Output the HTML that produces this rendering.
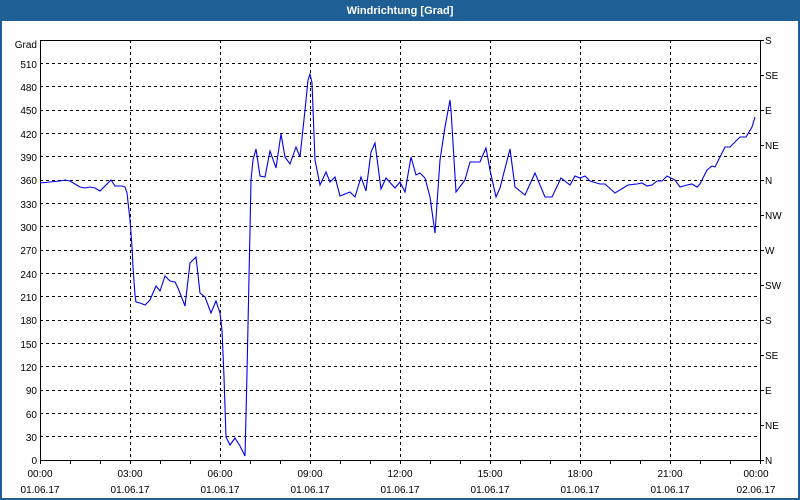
<!DOCTYPE html>
<html><head><style>
body{margin:0;width:800px;height:500px;overflow:hidden;background:#fff;font-family:"Liberation Sans",sans-serif}
</style></head><body>
<svg width="800" height="500" xmlns="http://www.w3.org/2000/svg" style="display:block">
<rect x="0" y="0" width="800" height="500" fill="#1e5f96"/>
<rect x="2" y="21" width="796" height="477" fill="#fff"/>
<text x="400" y="14" fill="#fff" font-size="11" font-weight="bold" text-anchor="middle" font-family="Liberation Sans,sans-serif">Windrichtung [Grad]</text>
<g stroke="#000" stroke-width="1" stroke-dasharray="3,3" shape-rendering="crispEdges">
<line x1="40" y1="63.5" x2="760" y2="63.5"/><line x1="40" y1="86.5" x2="760" y2="86.5"/><line x1="40" y1="110.5" x2="760" y2="110.5"/><line x1="40" y1="133.5" x2="760" y2="133.5"/><line x1="40" y1="156.5" x2="760" y2="156.5"/><line x1="40" y1="180.5" x2="760" y2="180.5"/><line x1="40" y1="203.5" x2="760" y2="203.5"/><line x1="40" y1="226.5" x2="760" y2="226.5"/><line x1="40" y1="250.5" x2="760" y2="250.5"/><line x1="40" y1="273.5" x2="760" y2="273.5"/><line x1="40" y1="296.5" x2="760" y2="296.5"/><line x1="40" y1="320.5" x2="760" y2="320.5"/><line x1="40" y1="343.5" x2="760" y2="343.5"/><line x1="40" y1="366.5" x2="760" y2="366.5"/><line x1="40" y1="390.5" x2="760" y2="390.5"/><line x1="40" y1="413.5" x2="760" y2="413.5"/><line x1="40" y1="436.5" x2="760" y2="436.5"/>
<line x1="130.5" y1="40" x2="130.5" y2="460"/><line x1="220.5" y1="40" x2="220.5" y2="460"/><line x1="310.5" y1="40" x2="310.5" y2="460"/><line x1="400.5" y1="40" x2="400.5" y2="460"/><line x1="490.5" y1="40" x2="490.5" y2="460"/><line x1="580.5" y1="40" x2="580.5" y2="460"/><line x1="670.5" y1="40" x2="670.5" y2="460"/>
</g>
<rect x="40.5" y="40.5" width="720" height="420" fill="none" stroke="#000" shape-rendering="crispEdges"/>
<g stroke="#000" shape-rendering="crispEdges">
<path d="M70.5 460v4M100.5 460v4M130.5 460v4M160.5 460v4M190.5 460v4M220.5 460v4M250.5 460v4M280.5 460v4M310.5 460v4M340.5 460v4M370.5 460v4M400.5 460v4M430.5 460v4M460.5 460v4M490.5 460v4M520.5 460v4M550.5 460v4M580.5 460v4M610.5 460v4M640.5 460v4M670.5 460v4M700.5 460v4M730.5 460v4M760.5 460v4M40.5 460v4"/>
<path d="M760 40.5h4M760 75.5h4M760 110.5h4M760 145.5h4M760 180.5h4M760 215.5h4M760 250.5h4M760 285.5h4M760 320.5h4M760 355.5h4M760 390.5h4M760 425.5h4M760 460.5h4"/>
</g>
<polyline fill="none" stroke="#0000ee" stroke-width="1.1" points="40,183 50,182 60,181 65,180 70,181 75,184 80,187 85,188 90,187 95,188 100,191 111,180 115,186 122,186 125,187 127,193 130,220 132,247 133,267 135,295 136,302 140,303 145,305 150,300 156,286 160,291 165,276 170,281 175,282 178,288 185,306 190,263 196,257 200,293 205,297 211,313 216,301 220,313 222,330 224,377 226,437 230,445 235,438 240,446 245,456 247,373 250,230 251,180 253,160 256,149 260,176 265,177 270,151 276,168 281,134 285,157 290,164 296,147 300,157 305,110 308,80 310,74 312,83 315,160 320,185 326,172 330,182 335,177 340,196 350,192 355,197 361,177 366,191 371,152 375,143 381,189 386,178 395,188 400,182 405,192 411,157 416,175 420,173 425,178 430,197 435,233 440,160 445,127 450,100 451,110 456,192 465,180 470,162 480,162 482,157 486,148 490,170 496,197 500,188 510,149 515,187 525,195 535,173 545,197 552,197 561,178 570,185 575,176 580,178 585,176 590,181 600,184 605,184 615,193 628,185 637,184 642,183 647,186 652,185 657,181 662,181 667,176 675,180 680,187 687,185 692,184 697,187 700,184 707,170 712,166 715,167 725,147 730,147 740,137 746,137 752,127 755,117"/>
<g font-size="10" fill="#000" text-anchor="end" font-family="Liberation Sans,sans-serif">
<text x="37" y="48">Grad</text>
<text x="37" y="68">510</text><text x="37" y="91">480</text><text x="37" y="114">450</text><text x="37" y="138">420</text><text x="37" y="161">390</text><text x="37" y="184">360</text><text x="37" y="208">330</text><text x="37" y="231">300</text><text x="37" y="254">270</text><text x="37" y="278">240</text><text x="37" y="301">210</text><text x="37" y="324">180</text><text x="37" y="348">150</text><text x="37" y="371">120</text><text x="37" y="394">90</text><text x="37" y="418">60</text><text x="37" y="441">30</text><text x="37" y="464">0</text>
</g>
<g font-size="10" fill="#000" font-family="Liberation Sans,sans-serif">
<text x="765" y="44">S</text><text x="765" y="79">SE</text><text x="765" y="114">E</text><text x="765" y="149">NE</text><text x="765" y="184">N</text><text x="765" y="219">NW</text><text x="765" y="254">W</text><text x="765" y="289">SW</text><text x="765" y="324">S</text><text x="765" y="359">SE</text><text x="765" y="394">E</text><text x="765" y="429">NE</text><text x="765" y="464">N</text>
</g>
<g font-size="10" fill="#000" text-anchor="middle" font-family="Liberation Sans,sans-serif">
<text x="40" y="477">00:00</text><text x="130" y="477">03:00</text><text x="220" y="477">06:00</text><text x="310" y="477">09:00</text><text x="400" y="477">12:00</text><text x="490" y="477">15:00</text><text x="580" y="477">18:00</text><text x="670" y="477">21:00</text><text x="756" y="477">00:00</text>
<text x="40" y="493">01.06.17</text><text x="130" y="493">01.06.17</text><text x="220" y="493">01.06.17</text><text x="310" y="493">01.06.17</text><text x="400" y="493">01.06.17</text><text x="490" y="493">01.06.17</text><text x="580" y="493">01.06.17</text><text x="670" y="493">01.06.17</text><text x="756" y="493">02.06.17</text>
</g>
</svg>
</body></html>
